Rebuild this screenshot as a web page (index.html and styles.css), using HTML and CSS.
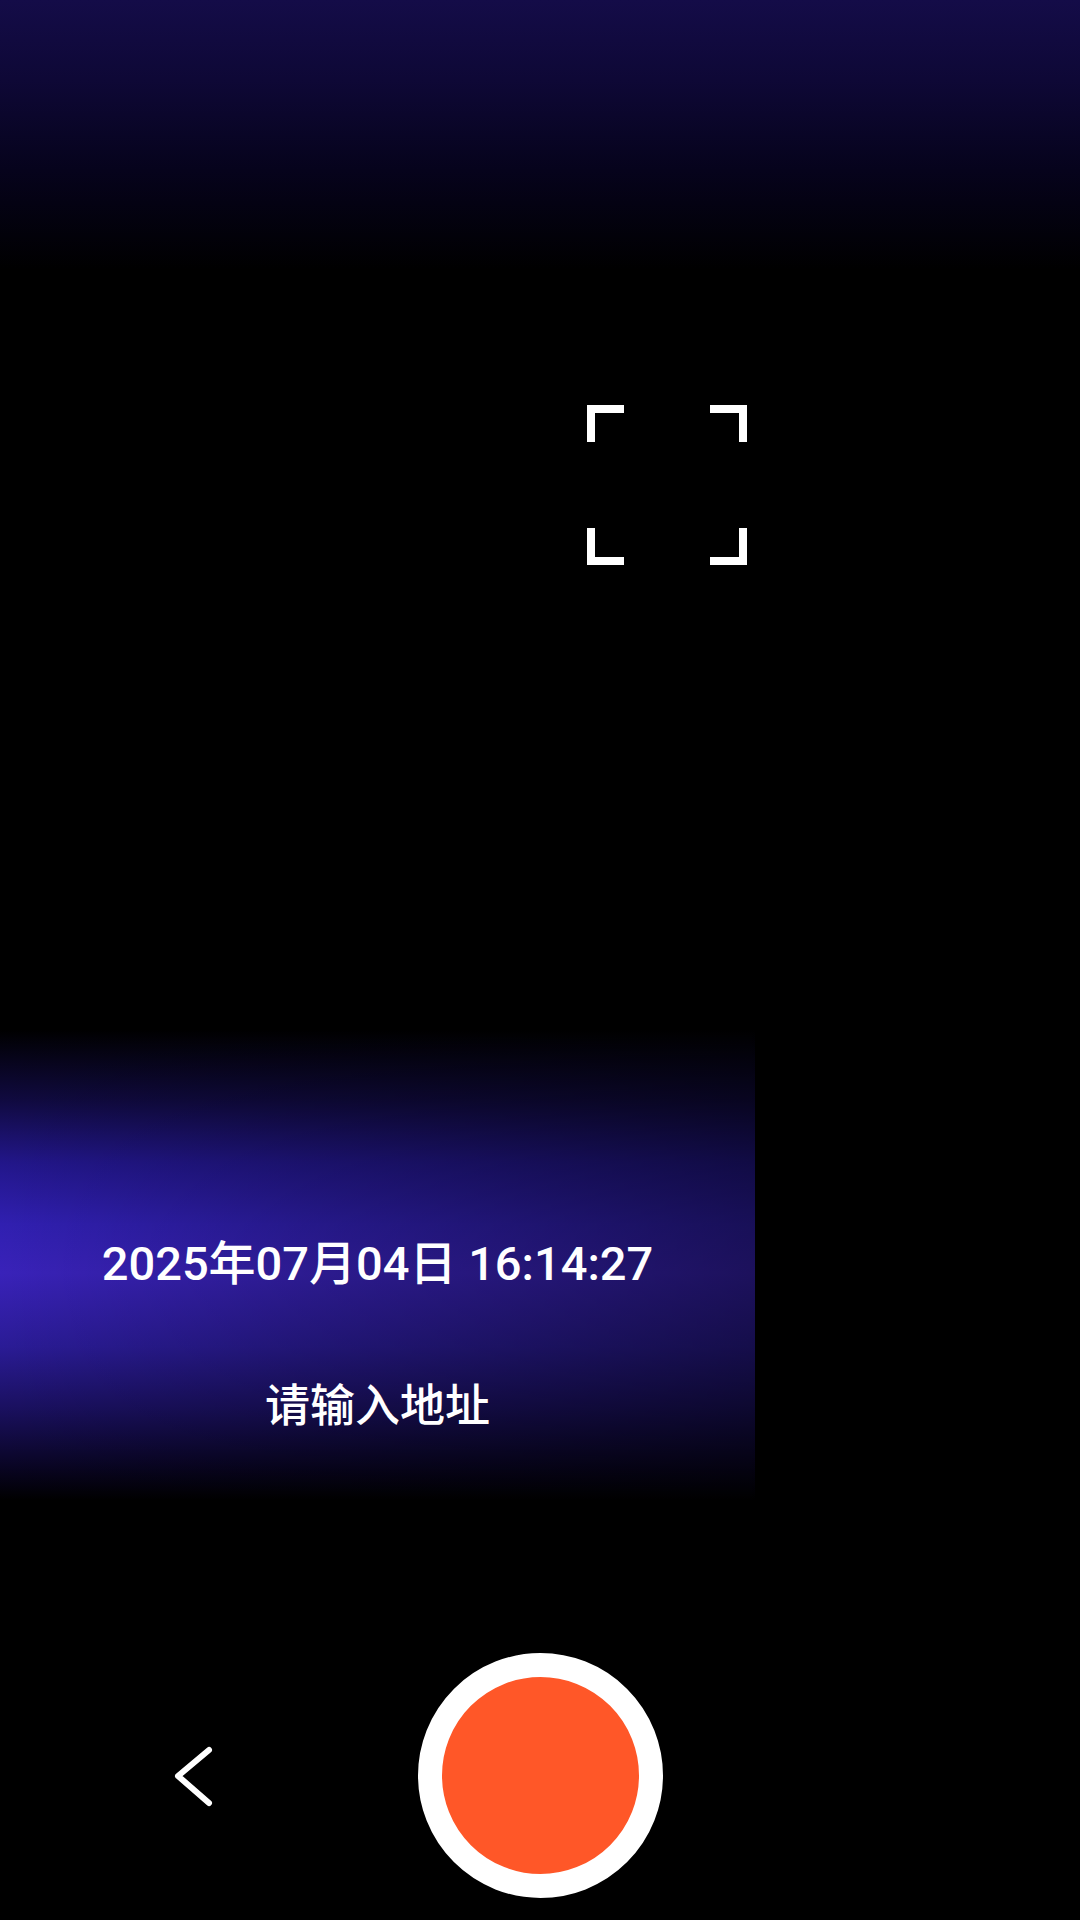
FILE: index.html
```html
<!DOCTYPE html>
<html lang="zh-CN">
<head>
<meta charset="utf-8">
<title>水印相机</title>
<link rel="stylesheet" href="styles.css">
</head>
<body>
<div class="screen">
  <div class="viewfinder">
    <svg class="focus" width="160" height="160" viewBox="0 0 160 160" aria-hidden="true">
      <path d="M4 37 V4 H37" />
      <path d="M123 4 H156 V37" />
      <path d="M4 123 V156 H37" />
      <path d="M123 156 H156 V123" />
    </svg>
  </div>
  <div class="stamp">
    <div class="stamp-date">2025年07月04日 16:14:27</div>
    <div class="stamp-addr">请输入地址</div>
  </div>
  <div class="controls">
    <svg class="back" width="50" height="70" viewBox="0 0 50 70" aria-label="返回">
      <path d="M41 9 L10 35 L41 62" />
    </svg>
    <div class="shutter"></div>
  </div>
</div>
</body>
</html>
```

FILE: styles.css
```css
html, body {
  margin: 0;
  padding: 0;
  background: #000;
}

body {
  width: 1080px;
  height: 1920px;
  overflow: hidden;
  font-family: "Roboto", "Noto Sans CJK SC", sans-serif;
  color: #fff;
}

.screen {
  width: 1080px;
  height: 1920px;
  display: flex;
  flex-direction: column;
  background: linear-gradient(180deg, #140c48 0px, #0e0836 80px, #06031c 170px, #000 270px) no-repeat;
  background-size: 1080px 280px;
  background-color: #000;
}

.viewfinder {
  height: 1030px;
  box-sizing: border-box;
  padding-top: 405px;
  padding-left: 587px;
}

.focus {
  display: block;
}

.focus path {
  fill: none;
  stroke: #fff;
  stroke-width: 8;
  stroke-linejoin: miter;
}

.stamp {
  width: 755px;
  height: 470px;
  box-sizing: border-box;
  padding-top: 206px;
  display: flex;
  flex-direction: column;
  align-items: center;
  background:
    linear-gradient(90deg, rgba(0, 0, 0, 0) 0%, rgba(0, 0, 0, 0.22) 40%, rgba(0, 0, 0, 0.5) 100%),
    linear-gradient(180deg, #000 0px, #100a40 70px, #22168a 133px, #301fb0 194px, #3922b9 243px, #2a1b95 317px, #1a1060 378px, #080420 440px, #000 470px);
}

.stamp-date {
  font-size: 47px;
  font-weight: 500;
  line-height: 56px;
  white-space: nowrap;
}

.stamp-addr {
  margin-top: 87px;
  font-size: 45px;
  font-weight: 500;
  line-height: 56px;
  white-space: nowrap;
}

.controls {
  margin-top: 153px;
  height: 245px;
  display: flex;
  align-items: center;
  padding-left: 168px;
}

.back {
  display: block;
}

.back path {
  fill: none;
  stroke: #fff;
  stroke-width: 6;
  stroke-linecap: round;
  stroke-linejoin: round;
}

.shutter {
  margin-left: 200px;
  width: 245px;
  height: 245px;
  box-sizing: border-box;
  border-radius: 50%;
  border: 24px solid #fff;
  background: #ff5728;
}
```
